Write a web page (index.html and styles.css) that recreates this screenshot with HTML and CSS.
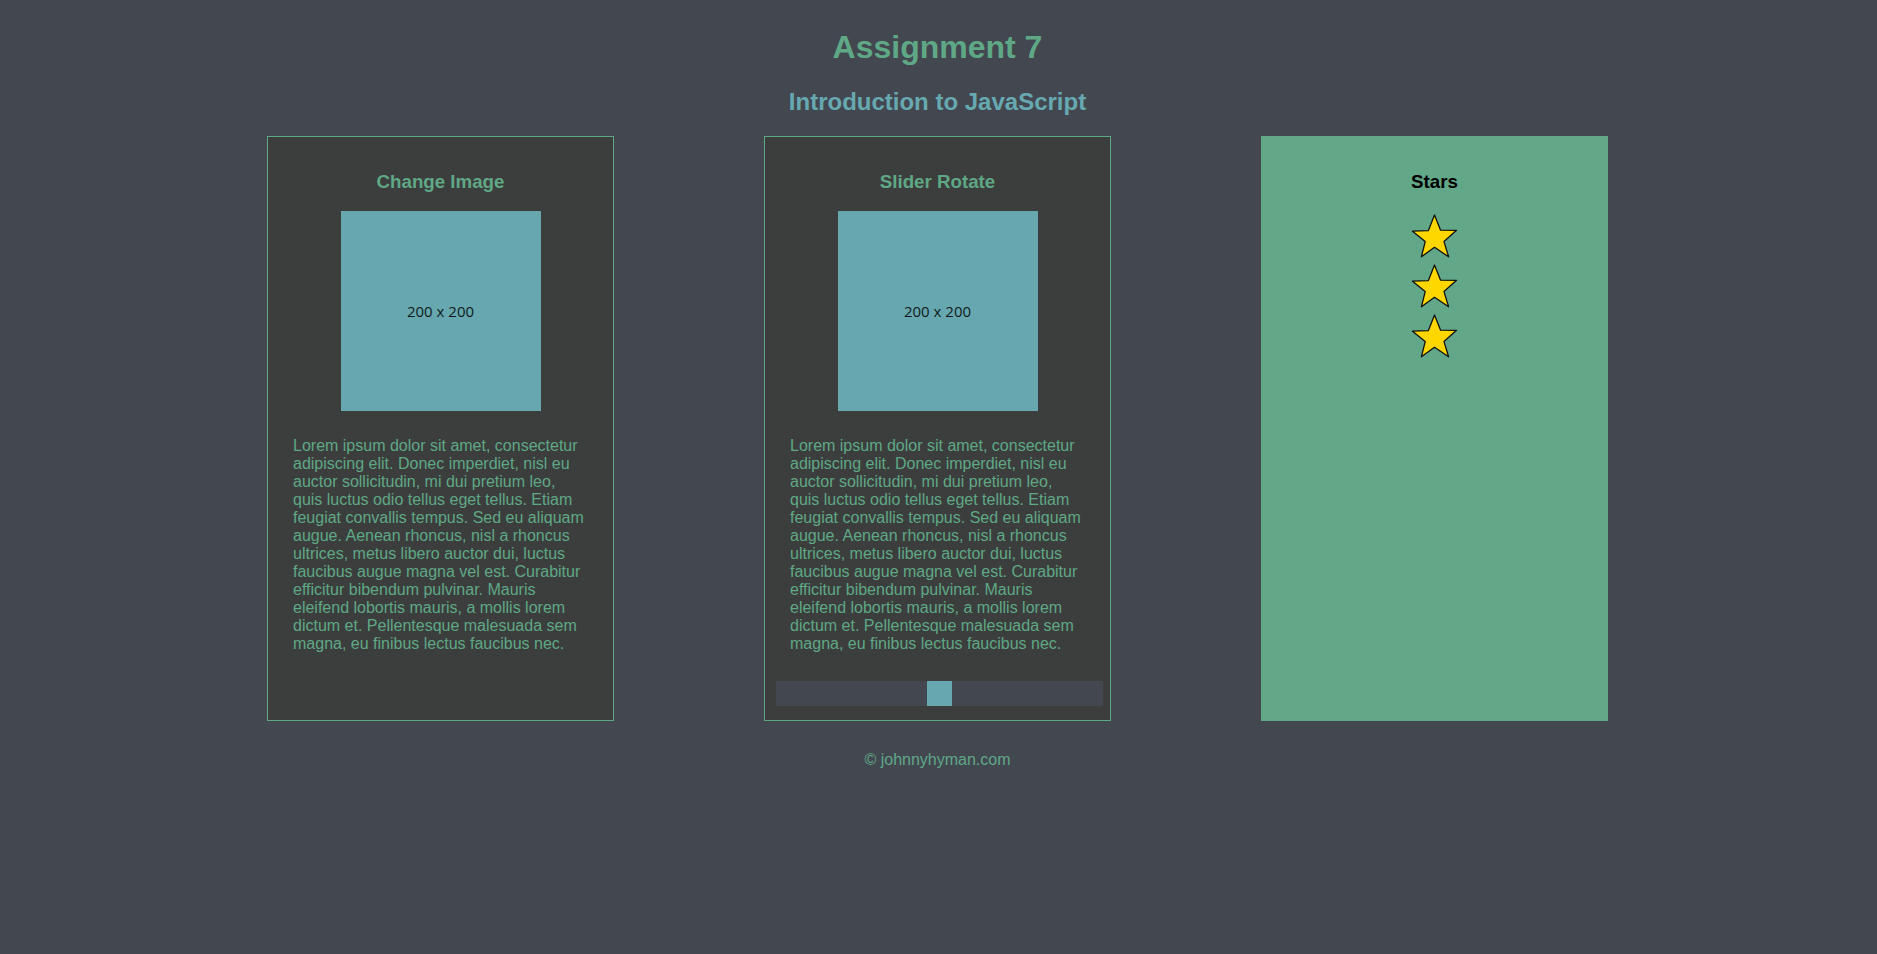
FILE: index.html
```html
<!DOCTYPE html>
<html lang="en">
<head>
<meta charset="utf-8">
<title>Assignment 7</title>
<link rel="stylesheet" href="styles.css">
</head>
<body>
<header class="header">
  <h1 class="title">Assignment 7</h1>
  <h2 class="subtitle">Introduction to JavaScript</h2>
</header>
<main class="cards">
  <section class="card">
    <h3 class="card-title">Change Image</h3>
    <div class="placeholder">200 x 200</div>
    <p class="card-text">Lorem ipsum dolor sit amet, consectetur adipiscing elit. Donec imperdiet, nisl eu auctor sollicitudin, mi dui pretium leo, quis luctus odio tellus eget tellus. Etiam feugiat convallis tempus. Sed eu aliquam augue. Aenean rhoncus, nisl a rhoncus ultrices, metus libero auctor dui, luctus faucibus augue magna vel est. Curabitur efficitur bibendum pulvinar. Mauris eleifend lobortis mauris, a mollis lorem dictum et. Pellentesque malesuada sem magna, eu finibus lectus faucibus nec.</p>
  </section>
  <section class="card">
    <h3 class="card-title">Slider Rotate</h3>
    <div class="placeholder">200 x 200</div>
    <p class="card-text">Lorem ipsum dolor sit amet, consectetur adipiscing elit. Donec imperdiet, nisl eu auctor sollicitudin, mi dui pretium leo, quis luctus odio tellus eget tellus. Etiam feugiat convallis tempus. Sed eu aliquam augue. Aenean rhoncus, nisl a rhoncus ultrices, metus libero auctor dui, luctus faucibus augue magna vel est. Curabitur efficitur bibendum pulvinar. Mauris eleifend lobortis mauris, a mollis lorem dictum et. Pellentesque malesuada sem magna, eu finibus lectus faucibus nec.</p>
    <div class="slider"><span class="slider-thumb"></span></div>
  </section>
  <section class="card card-stars">
    <h3 class="card-title card-title-dark">Stars</h3>
    <svg class="star" width="50" height="50" viewBox="0 0 50 50"><polygon points="24.5,4 30.6,19.2 46.5,19.3 34,30.6 38.6,45.8 24.5,36.3 11.4,45.8 15.2,30.6 2.5,20.2 18.4,19.6"/></svg>
    <svg class="star" width="50" height="50" viewBox="0 0 50 50"><polygon points="24.5,4 30.6,19.2 46.5,19.3 34,30.6 38.6,45.8 24.5,36.3 11.4,45.8 15.2,30.6 2.5,20.2 18.4,19.6"/></svg>
    <svg class="star" width="50" height="50" viewBox="0 0 50 50"><polygon points="24.5,4 30.6,19.2 46.5,19.3 34,30.6 38.6,45.8 24.5,36.3 11.4,45.8 15.2,30.6 2.5,20.2 18.4,19.6"/></svg>
  </section>
</main>
<footer class="footer">© johnnyhyman.com</footer>
</body>
</html>
```
FILE: styles.css
```css
html, body {
  margin: 0;
  padding: 0;
}
body {
  background: #434750;
  font-family: "Liberation Sans", Arial, sans-serif;
  color: #5fa886;
  margin-right: 2px;
}
.header {
  text-align: center;
  padding-top: 29px;
}
.title {
  margin: 0;
  font-size: 32px;
  line-height: 37px;
  font-weight: bold;
  color: #5fa886;
}
.subtitle {
  margin: 22px 0 0;
  font-size: 24px;
  line-height: 28px;
  font-weight: bold;
  color: #67a9b1;
}
.cards {
  display: flex;
  justify-content: center;
  gap: 150px;
  margin-top: 20px;
}
.card {
  box-sizing: border-box;
  width: 347px;
  border: 1px solid #5fa886;
  background: #3c3e3d;
  padding: 15px 0 14px;
  display: flex;
  flex-direction: column;
  align-items: center;
}
.card-title {
  margin: 19px 0 18px;
  font-size: 18.72px;
  line-height: 22px;
  font-weight: bold;
  color: #5fa886;
}
.card-title-dark {
  color: #000;
}
.placeholder {
  width: 200px;
  height: 200px;
  background: #67a8b0;
  display: flex;
  align-items: center;
  justify-content: center;
  font-family: "Open Sans", sans-serif;
  font-size: 15px;
  color: #111a1c;
  margin-bottom: 26px;
}
.card-text {
  align-self: stretch;
  margin: 0;
  padding: 0 25px;
  font-size: 16px;
  line-height: 18px;
  color: #5fa886;
}
.slider {
  align-self: stretch;
  margin: 28px 7px 0 11px;
  height: 25px;
  background: #434750;
  display: flex;
  justify-content: center;
}
.slider-thumb {
  width: 25px;
  height: 25px;
  background: #67a8b0;
}
.card-stars {
  background: #62a787;
  border-color: #62a787;
}
.star {
  display: block;
}
.star polygon {
  fill: #ffd700;
  stroke: #111;
  stroke-width: 1.3;
  stroke-linejoin: round;
}
.footer {
  margin-top: 30px;
  text-align: center;
  font-size: 16px;
  line-height: 18px;
  color: #5fa886;
}
```
